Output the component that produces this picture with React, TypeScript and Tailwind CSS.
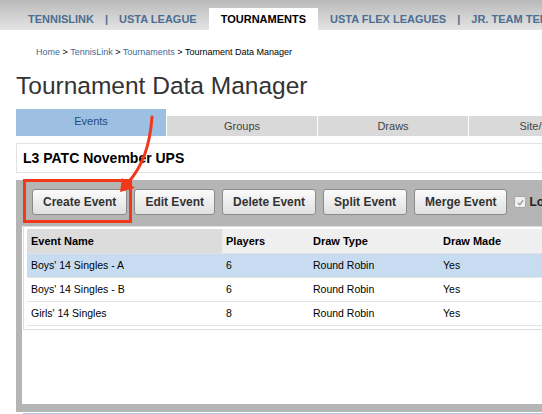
const NAV = [
  { label: "TENNISLINK", active: false, sep: true },
  { label: "USTA LEAGUE", active: false, sep: false },
  { label: "TOURNAMENTS", active: true, sep: false },
  { label: "USTA FLEX LEAGUES", active: false, sep: true },
  { label: "JR. TEAM TENNIS", active: false, sep: false },
];

const TABS = ["Events", "Groups", "Draws", "Site/Court"];

const BUTTONS = ["Create Event", "Edit Event", "Delete Event", "Split Event", "Merge Event"];

const ROWS = [
  { name: "Boys' 14 Singles - A", players: "6", type: "Round Robin", made: "Yes", selected: true },
  { name: "Boys' 14 Singles - B", players: "6", type: "Round Robin", made: "Yes", selected: false },
  { name: "Girls' 14 Singles", players: "8", type: "Round Robin", made: "Yes", selected: false },
];

export default function App() {
  return (
    <div
      className="relative w-[542px] h-[414px] overflow-hidden bg-white"
      style={{ fontFamily: '"Liberation Sans", Arial, sans-serif' }}
    >
      {/* Top nav */}
      <div className="h-[30px] flex items-end bg-gradient-to-b from-[#b9b9b9] to-[#e5e5e5] pl-[28px] whitespace-nowrap overflow-hidden">
        {NAV.map(({ label, active, sep }) => (
          <div key={label} className="flex items-end shrink-0">
            <div
              className={
                active
                  ? "h-[22px] bg-white px-[12px] flex items-center text-[11px] font-bold text-black"
                  : "h-[22px] flex items-center text-[11px] font-bold text-[#4b6e92]"
              }
            >
              {label}
            </div>
            {sep ? (
              <div className="h-[22px] flex items-center px-[11px] text-[11px] font-bold text-[#4b6e92]">|</div>
            ) : (
              <div className="w-[12px]" />
            )}
          </div>
        ))}
      </div>

      {/* Breadcrumb */}
      <div className="pl-[36px] pt-[16px] text-[9px] leading-[12px] text-black whitespace-nowrap">
        <span className="text-[#3f6a97]">Home</span> &gt; <span className="text-[#3f6a97]">TennisLink</span> &gt;{" "}
        <span className="text-[#3f6a97]">Tournaments</span> &gt; Tournament Data Manager
      </div>

      {/* Title */}
      <h1 className="pl-[16px] mt-[14px] h-[28px] text-[24.5px] leading-[28px] text-[#333] whitespace-nowrap">
        Tournament Data Manager
      </h1>

      {/* Tabs */}
      <div className="mt-[9px] ml-[16px] flex items-end gap-px text-[11px] whitespace-nowrap overflow-hidden">
        {TABS.map((t, i) =>
          i === 0 ? (
            <div key={t} className="w-[150px] h-[27px] shrink-0 bg-[#9dbfe2] flex items-center justify-center pb-[2px] text-[#1d4b7e]">
              {t}
            </div>
          ) : (
            <div key={t} className="w-[150px] h-[20px] shrink-0 bg-[#d9d9d9] flex items-center justify-center text-[#444]">
              {t}
            </div>
          )
        )}
      </div>

      {/* Event heading */}
      <div className="mt-[7px] ml-[16px] h-[30px] border border-r-0 border-[#e2e2e2] flex items-center pl-[6px] text-[14px] font-bold text-black whitespace-nowrap">
        L3 PATC November UPS
      </div>

      {/* Gray panel */}
      <div className="mt-[7px] ml-[16px] bg-[#b5b5b5] pb-[8px]">
        <div className="flex items-center gap-[7px] pl-[16px] pt-[9px] pb-[11px] whitespace-nowrap overflow-hidden">
          {BUTTONS.map((label) => (
            <div
              key={label}
              className="h-[26px] shrink-0 px-[10px] rounded-[3px] border border-[#8a8a8a] bg-gradient-to-b from-[#fbfbfb] to-[#e0e0e0] flex items-center justify-center text-[12px] font-bold text-[#333]"
            >
              {label}
            </div>
          ))}
          <div className="shrink-0 flex items-center gap-[3px] text-[12px] font-bold text-[#222]">
            <div className="w-[12px] h-[12px] rounded-[2px] border border-[#a8a8a8] bg-[#f0f0f0] flex items-center justify-center">
              <svg width="9" height="9" viewBox="0 0 10 10">
                <path d="M2 5.2 L4.2 7.5 L8 2.5" fill="none" stroke="#9a9a9a" strokeWidth="1.4" />
              </svg>
            </div>
            Lock
          </div>
        </div>

        <div className="ml-[6px] h-[178px] bg-white pl-[1px]">
          <div className="border border-r-0 border-[#dedede] p-[3px] pt-[2px] pr-0">
            <div className="text-[10.5px] text-black whitespace-nowrap">
              <div className="flex h-[25px] font-bold text-[11px] border-b border-[#e3e3e3]">
                <div className="w-[195px] shrink-0 bg-[#dcdcdc] pl-[4px] flex items-center">Event Name</div>
                <div className="flex-1 bg-[#efefef] flex items-center">
                  <div className="w-[87px] shrink-0 pl-[4px]">Players</div>
                  <div className="w-[130px] shrink-0 pl-[4px]">Draw Type</div>
                  <div className="pl-[4px]">Draw Made</div>
                </div>
              </div>
              {ROWS.map((r) => (
                <div
                  key={r.name}
                  className={`flex items-center h-[24px] border-b border-[#e3e3e3] ${r.selected ? "bg-[#c8dcf1]" : "bg-white"}`}
                >
                  <div className="w-[195px] shrink-0 pl-[4px]">{r.name}</div>
                  <div className="w-[87px] shrink-0 pl-[4px]">{r.players}</div>
                  <div className="w-[130px] shrink-0 pl-[4px]">{r.type}</div>
                  <div className="pl-[4px]">{r.made}</div>
                </div>
              ))}
            </div>
          </div>
        </div>
      </div>
      <div className="mt-[1px] ml-[23px] h-[2px] bg-[#a9c5e6]" />

      {/* Annotation overlay */}
      <svg className="absolute left-0 top-0 pointer-events-none" width="542" height="414">
        <rect x="24.5" y="180.5" width="106" height="41" fill="none" stroke="#f2381b" strokeWidth="3" />
        <path d="M152 117 C 150 145, 143 166, 127 184" fill="none" stroke="#f2381b" strokeWidth="3" strokeLinecap="round" />
        <polygon points="120,192 122,178 135,188" fill="#f2381b" />
      </svg>
    </div>
  );
}
